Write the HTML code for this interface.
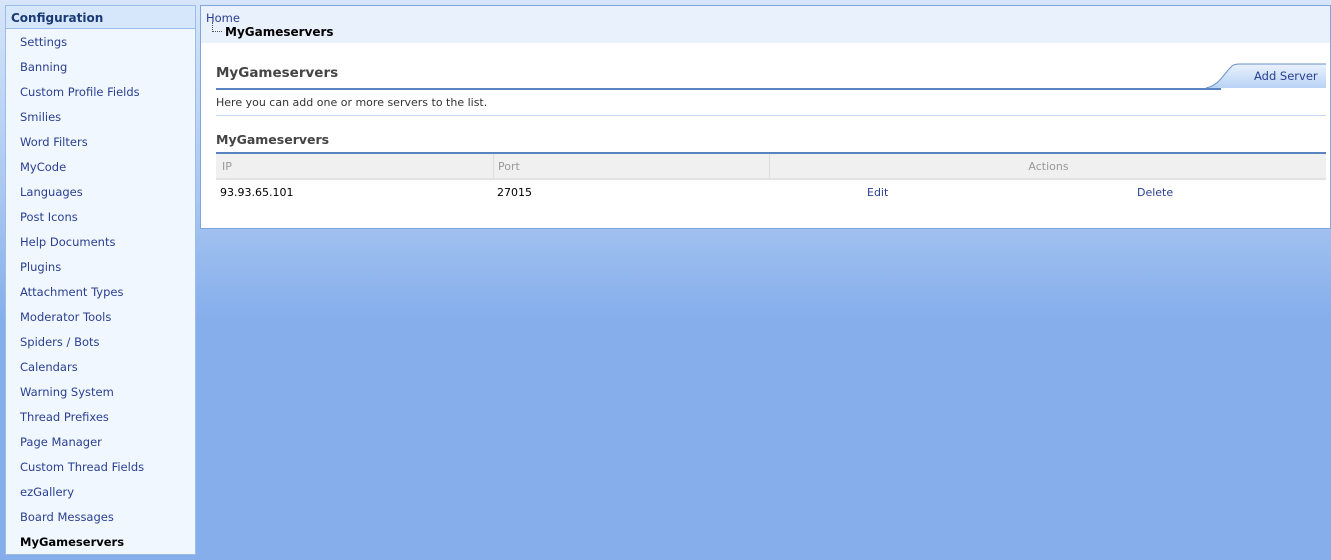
<!DOCTYPE html>
<html><head><style>
body{margin:0;width:1331px;height:560px;overflow:hidden;font-family:Verdana,"DejaVu Sans",sans-serif;font-size:11px;background:linear-gradient(#d6e5f9 0px,#a8c6f1 200px,#85aeeb 320px,#85aeeb 560px);position:relative}
.side{position:absolute;left:5px;top:5px;width:189px;height:548px;background:#f1f7ff;border:1px solid #9cbde9}
.side .h{height:22px;background:#d6e6fb;border-bottom:1px solid #9cbde9;color:#1a3a75;font-weight:bold;font-size:12px;line-height:24px;padding-left:5px}
.side div.i{height:25px;line-height:27px;padding-left:14px;color:#2a3f8f;font-size:11.5px}
.side div.b{color:#000;font-weight:bold}
.main{position:absolute;left:200px;top:5px;width:1129px;height:222px;background:#fff;border:1px solid #7ea5dd}
.bc{height:37px;background:#e9f1fc;padding-left:5px;font-size:11.5px}
.bc a{color:#2a3f8f;display:block;padding-top:5px}
.bc b{display:block;padding-left:19px;position:relative;font-size:12px}
.bc b:before{content:"";position:absolute;left:6px;top:-3px;width:9px;height:9px;border-left:1px dotted #555;border-bottom:1px dotted #555}
.t1{position:absolute;left:15px;top:59px;font-size:13.5px;font-weight:bold;color:#444}
.l1{position:absolute;left:15px;top:82px;width:1005px;border-top:2px solid #5984c0}
.desc{position:absolute;left:15px;top:90px;color:#333;font-size:11px}
.l2{position:absolute;left:15px;top:109px;width:1110px;border-top:1px solid #c7d9f2}
.t2{position:absolute;left:15px;top:126px;font-size:12.5px;font-weight:bold;color:#444}
.l3{position:absolute;left:15px;top:146px;width:1110px;border-top:2px solid #5984c0}
.thead{position:absolute;left:15px;top:148px;width:1110px;height:24px;background:#f0f0f0;border-bottom:2px solid #e2e2e2;color:#999;line-height:26px}
.thead span{position:absolute;top:0}
.row{position:absolute;left:15px;top:179px;width:1110px;line-height:16px;color:#000}
.row span{position:absolute;top:0}
.tab{position:absolute;left:1005px;top:57px;width:120px;height:26px}
</style></head><body>
<div class="side"><div class="h">Configuration</div>
<div class="i">Settings</div><div class="i">Banning</div><div class="i">Custom Profile Fields</div><div class="i">Smilies</div><div class="i">Word Filters</div><div class="i">MyCode</div><div class="i">Languages</div><div class="i">Post Icons</div><div class="i">Help Documents</div><div class="i">Plugins</div><div class="i">Attachment Types</div><div class="i">Moderator Tools</div><div class="i">Spiders / Bots</div><div class="i">Calendars</div><div class="i">Warning System</div><div class="i">Thread Prefixes</div><div class="i">Page Manager</div><div class="i">Custom Thread Fields</div><div class="i">ezGallery</div><div class="i">Board Messages</div><div class="i b">MyGameservers</div>
</div>
<div class="main">
<div class="bc"><a>Home</a><b>MyGameservers</b></div>
<div class="t1">MyGameservers</div>
<div class="l1"></div>
<svg class="tab" width="120" height="26" viewBox="0 0 120 26"><defs><linearGradient id="g" x1="0" y1="0" x2="0" y2="1"><stop offset="0" stop-color="#eaf2fd"/><stop offset="1" stop-color="#b9d3f6"/></linearGradient></defs><path d="M0 25 C14 22 18 10 26 3 Q28 1 34 1 L120 1 L120 25 Z" fill="url(#g)"/><path d="M0 25 C14 22 18 10 26 3 Q28 1 34 1 L120 1" fill="none" stroke="#6a8fc6"/><text x="48" y="17" font-family="Verdana,DejaVu Sans,sans-serif" font-size="11.5" fill="#2a3f8f">Add Server</text></svg>
<div class="desc">Here you can add one or more servers to the list.</div>
<div class="l2"></div>
<div class="t2">MyGameservers</div>
<div class="l3"></div>
<div class="thead"><span style="left:6px">IP</span><span style="left:277px;border-left:1px solid #ddd;padding-left:4px;height:24px">Port</span><span style="left:553px;border-left:1px solid #ddd;height:24px;width:557px;text-align:center">Actions</span></div>
<div class="row"><span style="left:4px">93.93.65.101</span><span style="left:281px">27015</span><span style="left:651px;color:#2a3f8f">Edit</span><span style="left:921px;color:#2a3f8f">Delete</span></div>
</div>
</body></html>
